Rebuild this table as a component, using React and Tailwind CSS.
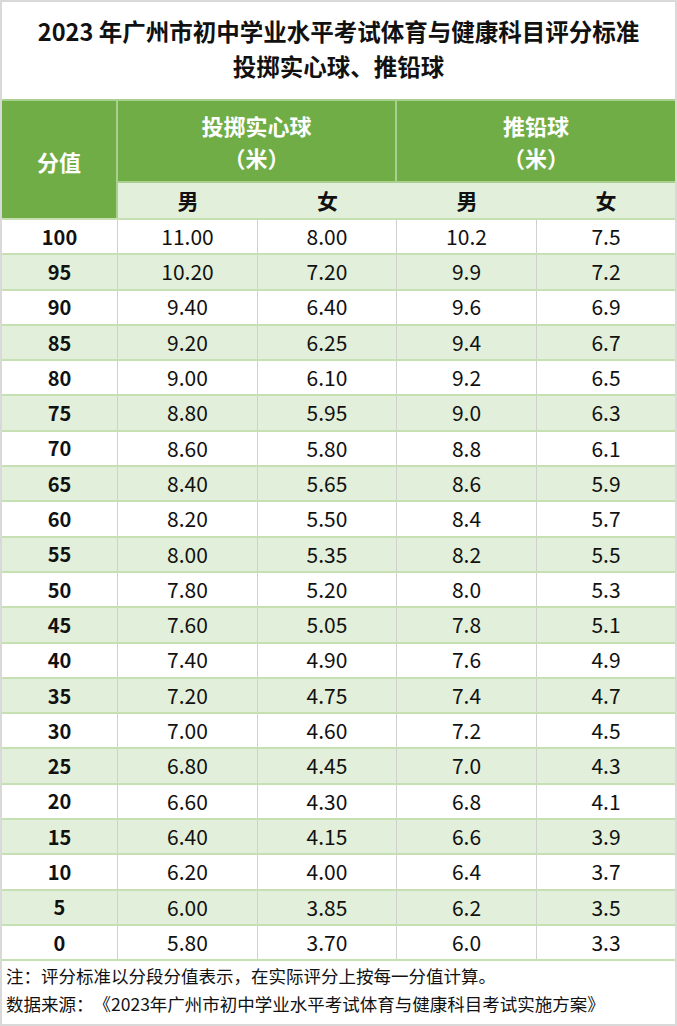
import React from "react";

const rows = [
  ["100", "11.00", "8.00", "10.2", "7.5"],
  ["95", "10.20", "7.20", "9.9", "7.2"],
  ["90", "9.40", "6.40", "9.6", "6.9"],
  ["85", "9.20", "6.25", "9.4", "6.7"],
  ["80", "9.00", "6.10", "9.2", "6.5"],
  ["75", "8.80", "5.95", "9.0", "6.3"],
  ["70", "8.60", "5.80", "8.8", "6.1"],
  ["65", "8.40", "5.65", "8.6", "5.9"],
  ["60", "8.20", "5.50", "8.4", "5.7"],
  ["55", "8.00", "5.35", "8.2", "5.5"],
  ["50", "7.80", "5.20", "8.0", "5.3"],
  ["45", "7.60", "5.05", "7.8", "5.1"],
  ["40", "7.40", "4.90", "7.6", "4.9"],
  ["35", "7.20", "4.75", "7.4", "4.7"],
  ["30", "7.00", "4.60", "7.2", "4.5"],
  ["25", "6.80", "4.45", "7.0", "4.3"],
  ["20", "6.60", "4.30", "6.8", "4.1"],
  ["15", "6.40", "4.15", "6.6", "3.9"],
  ["10", "6.20", "4.00", "6.4", "3.7"],
  ["5", "6.00", "3.85", "6.2", "3.5"],
  ["0", "5.80", "3.70", "6.0", "3.3"],
];

export default function App() {
  return (
    <div
      className="w-[677px] h-[1026px] bg-white text-[#111] border-2 border-[#d9d9d9] flex flex-col overflow-hidden [text-spacing-trim:space-all]"
      style={{ fontFamily: '"Noto Sans CJK SC", "Noto Sans", sans-serif' }}
    >
      {/* Title */}
      <div className="h-[99px] flex flex-col items-center justify-center gap-[5px] font-bold text-[23.5px] leading-[30px] border-b-2 border-[#a9d08e] pb-[4px]">
        <div>2023 年广州市初中学业水平考试体育与健康科目评分标准</div>
        <div>投掷实心球、推铅球</div>
      </div>

      {/* Header */}
      <div className="grid grid-cols-[116px_140px_139px_140px_1fr] grid-rows-[82px_35px] font-bold text-[22px]">
        <div className="row-span-2 bg-[#70ad47] text-white flex items-center justify-center border-r-2 border-[#a9d08e] pt-[4px]">
          分值
        </div>
        <div className="col-span-2 bg-[#70ad47] text-white flex flex-col items-center justify-center leading-[32px] border-r-2 border-[#a9d08e] border-b-2">
          <div>投掷实心球</div>
          <div>（米）</div>
        </div>
        <div className="col-span-2 bg-[#70ad47] text-white flex flex-col items-center justify-center leading-[32px] border-b-2 border-[#a9d08e]">
          <div>推铅球</div>
          <div>（米）</div>
        </div>
        <div className="bg-[#e2efda] flex items-center justify-center text-[21px]">男</div>
        <div className="bg-[#e2efda] flex items-center justify-center text-[21px]">女</div>
        <div className="bg-[#e2efda] flex items-center justify-center text-[21px]">男</div>
        <div className="bg-[#e2efda] flex items-center justify-center text-[21px]">女</div>
      </div>

      {/* Data */}
      {rows.map((r, i) => (
        <div
          key={r[0]}
          className={
            "grid grid-cols-[116px_140px_139px_140px_1fr] h-[35.3px] border-t-2 border-[#c6e0b4] text-[21px] " +
            (i % 2 === 1 ? "bg-[#e2efda]" : "bg-white")
          }
        >
          <div className="flex items-center justify-center font-bold text-[20px] border-r border-[#d0d0d0]">{r[0]}</div>
          <div className="flex items-center justify-center border-r border-[#d0d0d0]">{r[1]}</div>
          <div className="flex items-center justify-center border-r border-[#d0d0d0]">{r[2]}</div>
          <div className="flex items-center justify-center border-r border-[#d0d0d0]">{r[3]}</div>
          <div className="flex items-center justify-center">{r[4]}</div>
        </div>
      ))}

      {/* Footer */}
      <div className="flex-1 border-t-2 border-[#c6e0b4] px-[4px] pt-[1px] text-[17.5px] leading-[28px]">
        <div>注：评分标准以分段分值表示，在实际评分上按每一分值计算。</div>
        <div>数据来源：《2023年广州市初中学业水平考试体育与健康科目考试实施方案》</div>
      </div>
    </div>
  );
}
